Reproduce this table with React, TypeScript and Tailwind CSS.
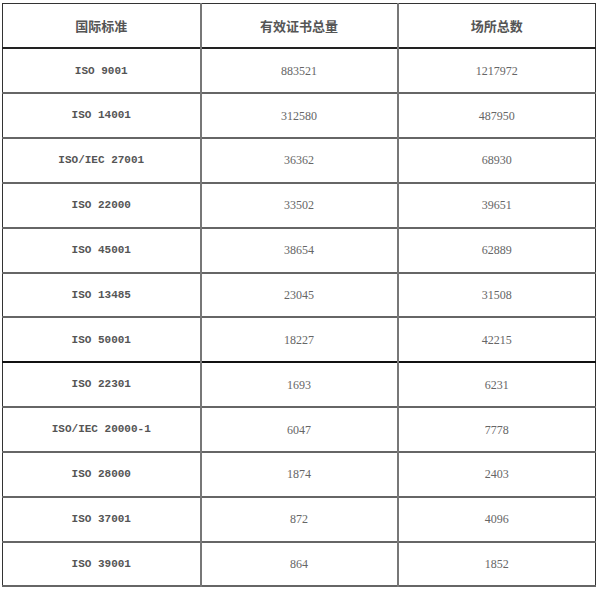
const rows: [string, string, string][] = [
  ["ISO 9001", "883521", "1217972"],
  ["ISO 14001", "312580", "487950"],
  ["ISO/IEC 27001", "36362", "68930"],
  ["ISO 22000", "33502", "39651"],
  ["ISO 45001", "38654", "62889"],
  ["ISO 13485", "23045", "31508"],
  ["ISO 50001", "18227", "42215"],
  ["ISO 22301", "1693", "6231"],
  ["ISO/IEC 20000-1", "6047", "7778"],
  ["ISO 28000", "1874", "2403"],
  ["ISO 37001", "872", "4096"],
  ["ISO 39001", "864", "1852"],
];

export default function App() {
  return (
    <div className="h-[590px] w-[602px] bg-white pl-[2px] pt-[3px]">
      <table className="w-[594px] table-fixed border-collapse border border-[#333]">
        <thead>
          <tr className="h-[44.85px] border-b-2 border-[#222]">
            {["国际标准", "有效证书总量", "场所总数"].map((h, i) => (
              <th
                key={h}
                className={`border-[#777] text-center text-[13px] font-bold text-[#555] [font-family:'Noto_Sans_CJK_SC',sans-serif] ${
                  i === 1 ? "w-[197px] border-x-2" : "w-[198px]"
                }`}
              >
                {h}
              </th>
            ))}
          </tr>
        </thead>
        <tbody>
          {rows.map(([std, certs, sites], i) => (
            <tr
              key={std}
              className={`h-[44.85px] ${
                i === 6 ? "border-b-2 border-[#111]" : "border-b-2 border-[#666]"
              }`}
            >
              <td className="text-center text-[11px] font-bold text-[#555] [font-family:'Liberation_Mono',monospace]">
                {std}
              </td>
              <td className="border-x-2 border-[#777] text-center text-[12px] text-[#666] [font-family:'Liberation_Serif',serif]">
                {certs}
              </td>
              <td className="text-center text-[12px] text-[#666] [font-family:'Liberation_Serif',serif]">
                {sites}
              </td>
            </tr>
          ))}
        </tbody>
      </table>
    </div>
  );
}
